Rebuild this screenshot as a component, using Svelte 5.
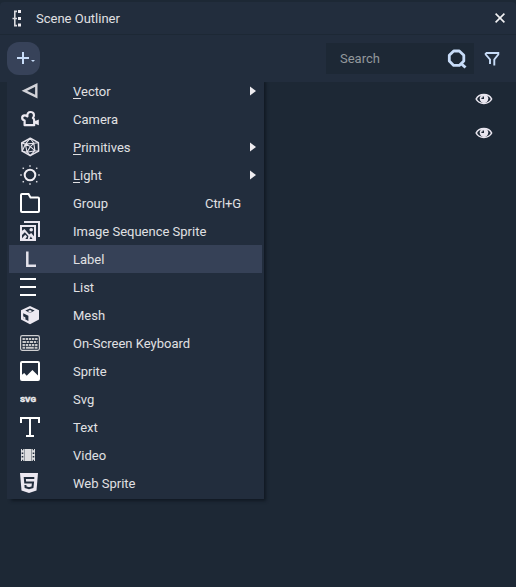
<script>
  const items = [
    { icon: 'vector', label: 'Vector', key: true, sub: true },
    { icon: 'camera', label: 'Camera' },
    { icon: 'primitives', label: 'Primitives', key: true, sub: true },
    { icon: 'light', label: 'Light', key: true, sub: true },
    { icon: 'group', label: 'Group', shortcut: 'Ctrl+G' },
    { icon: 'sequence', label: 'Image Sequence Sprite' },
    { icon: 'label', label: 'Label', active: true },
    { icon: 'list', label: 'List' },
    { icon: 'mesh', label: 'Mesh' },
    { icon: 'keyboard', label: 'On-Screen Keyboard' },
    { icon: 'sprite', label: 'Sprite' },
    { icon: 'svg', label: 'Svg' },
    { icon: 'text', label: 'Text' },
    { icon: 'video', label: 'Video' },
    { icon: 'web', label: 'Web Sprite' }
  ];
  const rays = [[10, 1], [16.7, 3.3], [19, 10], [16.7, 16.7], [10, 19], [3.3, 16.7], [1, 10], [3.3, 3.3]];
</script>

{#snippet glyph(name)}
  <svg class="glyph" width="20" height="20" viewBox="0 0 20 20">
    {#if name === 'vector'}
      <path d="M4 10.1 16 4.2V15.8Z" transform="translate(.3,-.3)" fill="none" stroke="#d2d2d8" stroke-width="2.4" stroke-linejoin="miter" />
    {:else if name === 'camera'}
      <path d="M4.6 16.2V11.6C1.3 10.8 1.4 6.6 4.6 6.3C5.9 6.2 6.7 6.7 7.4 7.4C7 4.4 8.4 3 10.6 3C14 3 15 6.6 12.9 8.9C13.8 9.6 14.2 10.4 14.2 11.6V16.2Z" fill="none" stroke="#ece9f1" stroke-width="2.2" stroke-linejoin="round" />
      <path d="M14 12.6 18.8 10.4v5.9l-4.8-2z" fill="#ece9f1" />
    {:else if name === 'primitives'}
      <g fill="none" stroke="#e6e4ec" stroke-width="1.5" stroke-linejoin="round">
        <path d="M10.3 1.2 18.4 5.7 18.6 14.1 10.2 18.6 2.2 14.2 1.7 6Z" />
        <path d="M10.3 1.2 5.4 7.1M10.3 1.2 13.8 6.3 18.4 5.7M1.7 6 5.4 7.1 2.2 14.2 7 15.2 10.2 18.6 14.9 13.7 18.6 14.1M10.3 9.6 5.4 7.1M10.3 9.6 13.8 6.3M10.3 9.6 7 15.2M10.3 9.6 14.9 13.7M5.4 7.1 13.8 6.3 14.9 13.7 7 15.2Z" stroke-width="1.1" />
      </g>
    {:else if name === 'light'}
      <circle cx="10" cy="10" r="5.3" fill="none" stroke="#f0eef3" stroke-width="2" />
      {#each rays as [x, y]}
        <rect x={x - 0.75} y={y - 0.75} width="1.5" height="1.5" fill="#d8d9df" />
      {/each}
    {:else if name === 'group'}
      <path d="M2 1H8.5L10.5 4.5H18a1 1 0 0 1 1 1V18a1 1 0 0 1-1 1H2a1 1 0 0 1-1-1V2a1 1 0 0 1 1-1Z" fill="none" stroke="#fff" stroke-width="2" />
    {:else if name === 'sequence'}
      <path d="M4 1H19V16" fill="none" stroke="#e9e6ef" stroke-width="2" />
      <rect x="1" y="5" width="14" height="14" fill="none" stroke="#e9e6ef" stroke-width="2" />
      <circle cx="11.2" cy="8.8" r="1.8" fill="#e9e6ef" />
      <path d="M1 10.5 4.5 8 9.2 13.6 11.2 12 15 16.5V18H12.5L10.8 15.6 9.5 18H7.8L8.4 15 4.8 11.3 2 14Z" fill="#e9e6ef" />
      <path d="M1 18.5 5.2 13.8 7 15.5 5 18.5Z" fill="#e9e6ef" />
    {:else if name === 'label'}
      <path d="M7.3 2.5V16.7H16" fill="none" stroke="#e4e2eb" stroke-width="2.5" />
    {:else if name === 'list'}
      <path d="M0 3H16M0 10H16M0 17H16" stroke="none" />
      <path d="M0 2H16M0 10H16M0 18H16" stroke="#fff" stroke-width="2" />
    {:else if name === 'mesh'}
      <path d="M10 1 19 5.3V14.6L10 19.2 1 14.6V5.3Z" fill="#ece9f1" />
      <path d="M10 3.4 14.7 5.6 10 7.9 5.3 5.6ZM3.2 8.3 8.4 10.8V15.9L3.2 13.2Z" fill="#222d3d" />
      <path d="M10 5 12 6 10 7.9 8 6ZM3.2 11.2 5.4 12.4V14.4L3.2 13.2Z" fill="#ece9f1" />
    {:else if name === 'keyboard'}
      <rect x=".6" y="2.6" width="18.8" height="14.8" rx="1.8" fill="none" stroke="#cfcfd1" stroke-width="1.2" />
      <g stroke="#c9c9ca" stroke-width="2.2">
        <path d="M2.5 6H17.5" stroke-dasharray="2.4 .75" />
        <path d="M2.5 9H17.5" stroke-dasharray="3.4 .8 2.2 .8" />
        <path d="M2.5 12H17.5" stroke-dasharray="2.4 .75" />
        <path d="M2.5 14.8H5.2M6 14.8H13.8M14.6 14.8H17.5" stroke-width="1.9" />
      </g>
    {:else if name === 'sprite'}
      <path fill-rule="evenodd" d="M2 0H18a2 2 0 0 1 2 2V18a2 2 0 0 1-2 2H2a2 2 0 0 1-2-2V2A2 2 0 0 1 2 0ZM2 2V13.8L4.2 12.1 6.7 14.8 12.4 9 18 14.5V2Z" fill="#fff" />
    {:else if name === 'svg'}
      <text x="0" y="12.9" textLength="16" lengthAdjust="spacingAndGlyphs" class="wordmark">SVG</text>
    {:else if name === 'text'}
      <path d="M1 6V1H19V6M10 1V19M6 19H14" fill="none" stroke="#fff" stroke-width="2" />
    {:else if name === 'video'}
      <path d="M4.4 4H11.6V16H4.4ZM1 4H2V5.3H3.2V4H4V16H3.2V14.7H2V16H1ZM12 4H12.8V5.3H14V4H15V16H14V14.7H12.8V16H12Z" fill="#dedee0" />
      <path d="M1.7 8.2H3.3M1.7 11.8H3.3M12.7 8.2H14.3M12.7 11.8H14.3" stroke="#222d3d" stroke-width="1.5" />
    {:else if name === 'web'}
      <path d="M0 0H18L16.5 17.5 9 20 1.5 17.5Z" fill="#ece8f1" />
      <path d="M14.3 5H4.8L5.2 9.4H13L12.5 14.2 9 15.3 5.6 14.2 5.4 12" fill="none" stroke="#222d3d" stroke-width="2" />
    {/if}
  </svg>
{/snippet}

{#snippet eye()}
  <svg width="18" height="14" viewBox="0 0 18 14">
    <path d="M1.2 7C4 .9 13.8 .9 16.6 7C13.8 12.8 4 12.8 1.2 7Z" fill="none" stroke="#e9e6ef" stroke-width="1.6" />
    <circle cx="9" cy="6.6" r="4.3" fill="#e9e6ef" />
    <path d="M9 4.5V7H6.4V5.8H7.6V4.5Z" fill="#1d2835" />
  </svg>
{/snippet}

<div class="panel">
  <header>
    <svg width="10" height="17" viewBox="0 0 10 17">
      <path d="M5 1.4H2.8V15.6H5M.5 8.5H5" fill="none" stroke="#d9dade" stroke-width="1.6" />
      <path d="M6 0h3v3H6zM6 7h3v3H6zM6 13.5h3v3H6z" fill="#f1eff4" />
    </svg>
    <span>Scene Outliner</span>
    <svg class="close" width="10" height="10" viewBox="0 0 10 10"><path d="M.6.6 9.4 9.4M9.4.6.6 9.4" stroke="#f2f2f4" stroke-width="1.6" /></svg>
  </header>

  <div class="toolbar">
    <button class="add" aria-label="Add">
      <svg width="33" height="33" viewBox="0 0 33 33">
        <path d="M10 16H22M16 10V22" stroke="#c8dcf8" stroke-width="2" />
        <path d="M24 18h4l-2 2z" fill="#c8dcf8" />
      </svg>
    </button>
    <div class="search">
      <span>Search</span>
      <svg width="20" height="20" viewBox="0 0 20 20">
        <path d="M6.7 2H12.3L16.8 6.3V12L12.3 16.4H6.7L2.3 12V6.3Z" fill="none" stroke="#c8dcf8" stroke-width="2.8" stroke-linejoin="round" />
        <path d="M13.5 14 18.5 18.5" stroke="#c8dcf8" stroke-width="3" />
      </svg>
    </div>
    <svg class="filter" width="16" height="16" viewBox="0 0 16 16">
      <path d="M1.7 2H14.3V3.5L10.3 8.5V14.5M1.7 2V3.5L6 8.5V13" fill="none" stroke="#c8dcf8" stroke-width="1.9" />
    </svg>
  </div>

  <main>
    <div class="eyes">{@render eye()}{@render eye()}</div>
    <div class="menu">
      {#each items as item}
        <div class="item" class:active={item.active}>
          {@render glyph(item.icon)}
          <span class="name">{#if item.key}<u>{item.label[0]}</u>{item.label.slice(1)}{:else}{item.label}{/if}</span>
          {#if item.shortcut}<span class="shortcut">{item.shortcut}</span>{/if}
          {#if item.sub}<svg class="arrow" width="6" height="10" viewBox="0 0 6 10"><path d="M0 .5 6 5 0 9.5Z" fill="#eeecf0" /></svg>{/if}
        </div>
      {/each}
    </div>
  </main>
</div>

<style>
  :global(body) { background: #1d2835; }
  .panel { height: 587px; overflow: hidden; display: flex; flex-direction: column; background: #1d2835; color: #e0e0e3; font: 13px/28px Roboto, sans-serif; }
  header { height: 32px; margin-top: 2px; border-bottom: 1px solid #1d2835; border-radius: 4px 4px 0 0; background: #222d3d; display: flex; align-items: center; padding: 0 11px 0 12px; }
  header span { margin-left: 14px; padding-top: 1px; }
  .close { margin-left: auto; }
  .toolbar { height: 47px; flex: none; background: #222d3d; display: flex; align-items: center; padding: 0 16px 0 7px; box-sizing: border-box; }
  .add { width: 33px; height: 33px; border: 0; border-radius: 12px; padding: 0; background: #374259; display: flex; }
  .search { margin-left: auto; width: 148px; height: 31px; background: #1d2835; display: flex; align-items: center; justify-content: space-between; padding: 0 7px 0 14px; box-sizing: border-box; color: #93989c; }
  .filter { margin-left: 10px; }
  main { position: relative; flex: 1; }
  .eyes { display: flex; flex-direction: column; align-items: flex-end; gap: 20px; padding: 10px 23px 0 0; }
  .menu { position: absolute; left: 7px; top: -5px; width: 257px; height: 422px; padding: 0 2px; box-sizing: border-box; background: #222d3d; box-shadow: 3px 3px 3px -1px #111923; clip-path: inset(5px -8px -8px 0); }
  .item { height: 28px; display: flex; align-items: center; padding: 0 6px 0 11px; }
  .active { background: #364157; }
  .glyph { flex: none; }
  .name { margin-left: 33px; padding-top: 2px; line-height: 26px; white-space: nowrap; }
  .name u { text-underline-offset: 2px; text-decoration-skip-ink: none; }
  .arrow { margin-left: auto; }
  .shortcut { margin: 0 15px 0 auto; padding-top: 2px; line-height: 26px; letter-spacing: -.1px; }
  .wordmark { font: 900 8px Roboto, sans-serif; fill: #e9e9ec; stroke: #e9e9ec; stroke-width: .4px; }
</style>
